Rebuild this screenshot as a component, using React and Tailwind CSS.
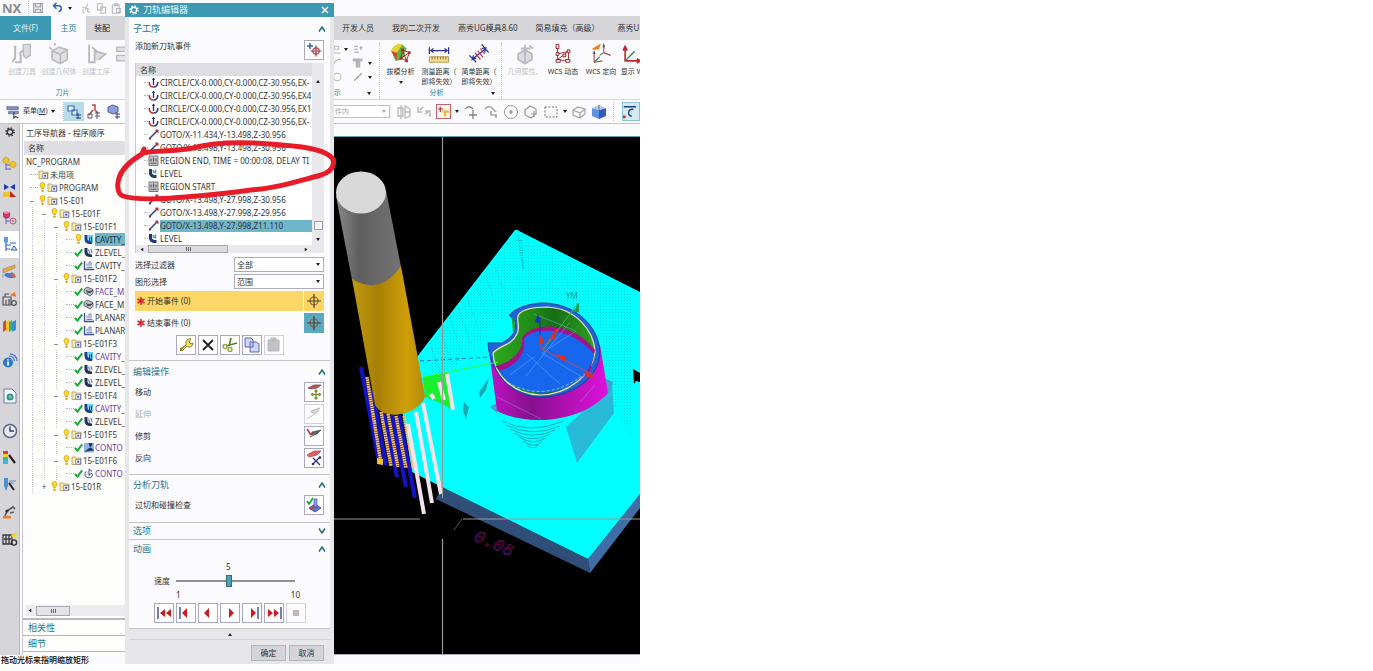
import React, { useState } from "react";

/* ---------- small shared drawings ---------- */

const Svg = ({ size = "size-4", box = "0 0 16 16", children }) => (
  <svg viewBox={box} className={`${size} shrink-0`} fill="none" aria-hidden="true">
    {children}
  </svg>
);

const Down = () => (
  <svg viewBox="0 0 4 3" className="h-[3px] w-1 shrink-0" aria-hidden="true">
    <path d="M0 0h4L2 3z" fill="#222" />
  </svg>
);

const Chevron = ({ up }) => (
  <Svg size="size-2" box="0 0 8 8">
    <path d={up ? "M1 6.500 4 2l3 4.500" : "M1 1.500 4 6l3-4.500"} stroke="#1d6a78" strokeWidth="1.500" />
  </Svg>
);

const Gear = ({ color, size = "size-[10px]" }) => (
  <Svg size={size} box="0 0 12 12">
    <circle cx="6" cy="6" r="3.300" stroke={color} strokeWidth="1.700" />
    <circle cx="6" cy="6" r="4.900" stroke={color} strokeWidth="1.500" strokeDasharray="1.900 1.950" />
  </Svg>
);

/* ---------- tree icons ---------- */

const Bulb = () => (
  <Svg size="h-[11px] w-[9px]" box="0 0 9 11">
    <path d="M4.500.5C2.800.5 2 1.700 2 3c0 1.200 1.200 2 1.400 3.500h2.200C5.800 5 7 4.200 7 3 7 1.700 6.200.5 4.500.5z" fill="#ffd91f" stroke="#c79a10" strokeWidth=".7" />
    <rect x="3.300" y="7.500" width="2.400" height="2.600" rx="1" fill="#d9a514" />
  </Svg>
);
const Check = () => (
  <Svg size="h-[11px] w-[9px]" box="0 0 9 11">
    <path d="M1 5.800 3.400 8.600 8.200 2.300" stroke="#12ae33" strokeWidth="2" />
  </Svg>
);
const Folder = () => (
  <Svg size="h-[11px] w-3" box="0 0 12 11">
    <path d="M1 2h3.500l1 1.200H10v6.300H1z" fill="#f8e9a8" stroke="#b8a468" strokeWidth=".9" />
    <rect x="4.800" y="4.300" width="4.800" height="4.800" fill="#fff" stroke="#6a72a8" strokeWidth=".8" />
    <path d="M6.200 5.700h2v2h-2z" fill="#46508c" />
  </Svg>
);
const OpIcon = ({ kind }) => (
  <Svg size="h-[11px] w-3" box="0 0 12 11">
    {kind === "cavity" && (
      <>
        <path d="M5 1h5v8H6z" fill="#5fd0ee" />
        <path d="M1.500 1h3v3.500c0 2 1.500 3 4.500 3v2.500C4 10.500 1.500 8.500 1.500 5z" fill="#1f3f86" />
        <path d="M6.500 3.500v4M8.500 3v4" stroke="#1c3a70" />
      </>
    )}
    {kind === "level" && (
      <>
        <path d="M1.500 1h3v3.500c0 2 1.500 3 4.500 3v2.500C4 10.500 1.500 8.500 1.500 5z" fill="#26335f" />
        <path d="M5.500 2.500 7 7M8 2l1 4" stroke="#6f86b8" strokeWidth="1.200" />
      </>
    )}
    {kind === "planar" && (
      <>
        <path d="M1.500 1v8.500H11" stroke="#3a4b8f" strokeWidth="1.300" />
        <path d="M3.500 7.500h6M4 6V3.500M6 6.500V2h2v4.500" stroke="#6b7fb8" />
      </>
    )}
    {kind === "face" && (
      <>
        <path d="M1 3.500 4 1l6 2.500v4L7 10 1 6.500z" fill="#b8bcc4" stroke="#4d525c" strokeWidth=".8" />
        <path d="M3 4.500 7 6.500 10 4M4 7l4-2" stroke="#33363d" />
      </>
    )}
    {kind === "contour" && (
      <>
        <rect x="1" y="1" width="10" height="9.500" fill="#8fb5e4" />
        <path d="M2 9.500c2 0 3-3 5-3.500s2 2 3.500 2.500M6 1.500h3L7.500 5z" fill="#1c2f66" stroke="#1c2f66" />
      </>
    )}
    {kind === "contour2" && (
      <path d="M3 3.500C1 6 2 9.500 5.500 9.800 9 10 10.500 7 8.800 5.200L6 7.200V1l3 2.500" fill="#dfe4ee" stroke="#44507c" />
    )}
  </Svg>
);

const tree = [
  { d: 0, t: "NC_PROGRAM", root: true },
  { d: 0, t: "未用项", folder: true },
  { d: 0, t: "PROGRAM", s: "bulb", folder: true },
  { d: 0, t: "15-E01", s: "bulb", folder: true, x: "−" },
  { d: 1, t: "15-E01F", s: "bulb", folder: true, x: "−" },
  { d: 2, t: "15-E01F1", s: "bulb", folder: true, x: "−" },
  { d: 3, t: "CAVITY_", s: "bulb", k: "cavity", sel: true },
  { d: 3, t: "ZLEVEL_", s: "ok", k: "level" },
  { d: 3, t: "CAVITY_", s: "ok", k: "planar" },
  { d: 2, t: "15-E01F2", s: "bulb", folder: true, x: "−" },
  { d: 3, t: "FACE_M", s: "ok", k: "face", v: true },
  { d: 3, t: "FACE_M", s: "ok", k: "face" },
  { d: 3, t: "PLANAR", s: "ok", k: "planar" },
  { d: 3, t: "PLANAR", s: "ok", k: "planar" },
  { d: 2, t: "15-E01F3", s: "bulb", folder: true, x: "−" },
  { d: 3, t: "CAVITY_", s: "ok", k: "cavity", v: true },
  { d: 3, t: "ZLEVEL_", s: "ok", k: "level" },
  { d: 3, t: "ZLEVEL_", s: "ok", k: "level" },
  { d: 2, t: "15-E01F4", s: "bulb", folder: true, x: "−" },
  { d: 3, t: "CAVITY_", s: "ok", k: "cavity", v: true },
  { d: 3, t: "ZLEVEL_", s: "ok", k: "level" },
  { d: 2, t: "15-E01F5", s: "bulb", folder: true, x: "−" },
  { d: 3, t: "CONTO", s: "ok", k: "contour", v: true },
  { d: 2, t: "15-E01F6", s: "bulb", folder: true, x: "−" },
  { d: 3, t: "CONTO", s: "ok", k: "contour2", v: true },
  { d: 1, t: "15-E01R", s: "bulb", folder: true, x: "+" },
];

function TreeRow({ n }) {
  return (
    <li className="flex h-[13px] items-center whitespace-nowrap" role="treeitem" aria-selected={!!n.sel}>
      {Array.from({ length: n.d }, (_, i) => (
        <span key={i} className="flex h-full w-3 shrink-0 justify-center">
          <span className="border-l border-dotted border-[#c9c9d4]" />
        </span>
      ))}
      {!n.root && (
        <span className="flex w-3 shrink-0 items-center justify-center text-[8px] leading-none text-[#444]">
          {n.x || <span className="ml-1 w-2 border-t border-dotted border-[#b9b9c6]" />}
        </span>
      )}
      {n.s === "bulb" && <Bulb />}
      {n.s === "ok" && <Check />}
      {n.folder && <Folder />}
      {n.k && <OpIcon kind={n.k} />}
      <span
        className={
          n.sel ? "grow bg-[#6fb6cb] text-[#17303a]" : n.v ? "text-[#6a3fa8]" : "text-[#3a3a3a]"
        }
      >
        {n.t}
      </span>
    </li>
  );
}

/* ---------- resource rail ---------- */

const railIcons = [
  {
    n: "装配导航器",
    d: (
      <>
        <path d="M4 5v9M4 9h8M4 13h5" stroke="#5a64c8" />
        <path d="M1 3l3-2 3 2v3L4 8 1 6zM8 7l3-2 3 2v3l-3 2-3-2z" fill="#f3c22c" stroke="#b98b14" strokeWidth=".6" />
      </>
    ),
  },
  {
    n: "约束导航器",
    d: (
      <>
        <path d="M2 1v6l5-3zM13 1v6L8 4z" fill="#2336b8" />
        <path d="M1 9h7v5H1z" fill="#f0c52a" />
        <path d="M8 14V8l6 6z" fill="#cf1f1f" />
      </>
    ),
  },
  {
    n: "部件导航器",
    d: (
      <>
        <path d="M4 6v8M4 11h4" stroke="#5a64c8" />
        <path d="M1.500 2.500v4c0 2 6 2 6 0v-4z" fill="#d83a66" stroke="#8c1c3d" strokeWidth=".7" />
        <ellipse cx="4.500" cy="2.500" rx="3" ry="1.300" fill="#f08aa6" />
        <circle cx="11" cy="11" r="3" stroke="#c05088" />
        <circle cx="11" cy="11" r="1" fill="#c05088" />
      </>
    ),
  },
  {
    n: "工序导航器",
    active: true,
    d: (
      <>
        <path d="M4 4v10M4 8h5M4 12h4" stroke="#3c62b8" strokeWidth="1.200" />
        <path d="M2 0h4v5L4 7 2 5z" fill="#5b9de0" />
        <path d="M8 6h6M9 13l3-4 3 4z" stroke="#2f5fc0" fill="#cfe2f8" />
      </>
    ),
  },
  {
    n: "机床导航器",
    d: (
      <>
        <path d="M1 5 13 1v3L1 9zM1 10v4" fill="#f2a732" stroke="#8e8e94" strokeWidth=".7" />
        <path d="M2 11c3-4 5 0 8-3l4 5c-4 2-8 2-12-2z" fill="#4f78c8" />
        <circle cx="11" cy="11" r="2" fill="#e8622c" />
      </>
    ),
  },
  {
    n: "机器库",
    d: (
      <>
        <path d="M1 6h8v8H1zM3 6V3h4M4 9v5M7 8v6" stroke="#505158" strokeWidth="1.200" />
        <path d="M8 4l5-3 1 5z" fill="#ef7330" />
        <circle cx="12" cy="12" r="2.300" stroke="#555" strokeWidth="1.200" />
      </>
    ),
  },
  {
    n: "重用库",
    d: (
      <>
        <path d="M1 4l3-2v10l-3 2z" fill="#d34b3e" />
        <path d="M4 4l3-2v10l-3 2z" fill="#f0c42c" />
        <path d="M7 4l3-2v10l-3 2z" fill="#48ae47" />
        <path d="M10 4l4-2v10l-4 2z" fill="#3b8fd6" />
      </>
    ),
  },
  {
    n: "HD3D 工具",
    gap: true,
    d: (
      <>
        <circle cx="6" cy="9.500" r="5" fill="#2f78cc" />
        <path d="M6 8.500v4M6 6.200v1.300" stroke="#fff" strokeWidth="1.700" />
        <path d="M7 3c3 0 5 2 5.500 5M8 .8C12 1 15 4 15 8" stroke="#3c76c0" strokeWidth="1.200" />
      </>
    ),
  },
  {
    n: "Web 浏览器",
    gap: true,
    d: (
      <>
        <path d="M2 1h8l4 4v10H2z" fill="#f6f9ff" stroke="#6f7ea0" />
        <circle cx="8" cy="9" r="3.500" fill="#2d8fa8" />
        <path d="M6 8l3-1 1 3-2 1z" fill="#7bd05c" />
      </>
    ),
  },
  {
    n: "历史记录",
    gap: true,
    d: (
      <>
        <circle cx="8" cy="8" r="6.500" fill="#e7ebf4" stroke="#5d6785" strokeWidth="1.500" />
        <path d="M8 3.500V8h4" stroke="#333b58" strokeWidth="1.400" />
      </>
    ),
  },
  {
    n: "系统材料",
    d: (
      <>
        <path d="M1 1h5v4H1z" fill="#e23a2e" />
        <path d="M1 4h5v3H1z" fill="#f5d32c" />
        <path d="M1 7h5v3H1z" fill="#3cc24a" />
        <path d="M1 10h5v4H1z" fill="#38b6e8" />
        <path d="M7 5l6 8" stroke="#222" strokeWidth="2.200" />
      </>
    ),
  },
  {
    n: "加工向导",
    d: (
      <>
        <path d="M2 1h4v8l-2 5-2-5z" fill="#4d8fd4" />
        <path d="M7 4h7M7 6h5" stroke="#6c8ac0" />
        <path d="M7 6l5 7" stroke="#222" strokeWidth="2" />
      </>
    ),
  },
  {
    n: "机器人",
    d: (
      <>
        <path d="M3 12l2-5 6-4 2 2M8 9l4-1" stroke="#5c5f68" strokeWidth="1.800" />
        <path d="M1 12h8v2.500H1z" fill="#e88032" />
        <circle cx="5" cy="7" r="1.600" fill="#333" />
      </>
    ),
  },
  {
    n: "机床库",
    d: (
      <>
        <path d="M1 4h9v9H1zM4 4v9M7 4v9M2 8h7" stroke="#3a3b40" strokeWidth="1.300" />
        <path d="M9 4l5-3 1 4-4 2z" fill="#f2d23a" />
        <circle cx="12" cy="11.500" r="2.600" stroke="#333" strokeWidth="1.400" />
      </>
    ),
  },
];

/* ---------- ribbon ---------- */

const G = "#b9b9bf";

const ribbonDisabled = {
  tool: (
    <>
      <path d="M9 1h5v8l-3 2-2-2z" fill="#dcdce0" stroke={G} />
      <path d="M3 2v9l-2 3M7 8v6H3M9 5l-3 3" stroke={G} strokeWidth="1.500" />
    </>
  ),
  geo: (
    <>
      <path d="M3 6l5-3 6 2v7l-5 3-6-3z" fill="#e2e2e6" />
      <path d="M3 6l5-3 6 2v7l-5 3-6-3zM3 6l6 2 5-3M9 8v7M1 3l2 2M5 0v2" stroke={G} strokeWidth="1.200" />
    </>
  ),
  op: (
    <>
      <path d="M7 6l8 2-6 5-2-1z" fill="#dcdce0" />
      <path d="M3 1v13h4V6l8 2-5 4M5 3l5 4" stroke={G} strokeWidth="1.300" />
    </>
  ),
  attr: (
    <>
      <path d="M3 8l5-3 5 3v4l-5 3-5-3z" fill="#dcdce0" />
      <path d="M8 1v9M5 4h7M3 8l5-3 5 3v4l-5 3-5-3zM8 10v5M11 2l3 2" stroke={G} strokeWidth="1.300" />
    </>
  ),
};

function RibbonItem({ icon, label, label2, muted, drop, width }) {
  return (
    <button
      type="button"
      disabled={muted}
      className={`flex shrink-0 flex-col items-center whitespace-nowrap text-[7px] leading-[10px] ${width} ${
        muted ? "text-[#c2c2c6]" : "text-[#333]"
      }`}
    >
      <Svg size="size-[22px]">{icon}</Svg>
      <span className="mt-[2px]">{label}</span>
      {label2 && <span>{label2}</span>}
      {drop && <span className="mt-1"><Down /></span>}
    </button>
  );
}

const draft = (
  <>
    <path d="M1 6c1-4 5-6 8-5l3 3-3 8-5 1z" fill="#58b947" />
    <path d="M1 6c1-4 5-6 8-5l-4 6z" fill="#f0d02c" />
    <path d="M1 6l4 1 0 6z" fill="#e0452c" />
    <path d="M9 5l5 2-2 6-4-2zM14 7l-6 4M9 5l3 8" stroke="#a02424" strokeWidth=".7" />
    <path d="M8 4h2v2H8zM13 6h2v2h-2zM11 12h2v2h-2zM7 10h2v2H7z" fill="#b02a2a" />
  </>
);
const ruler = (
  <>
    <path d="M1 3v5M15 3v5M2 5.500h12M4 4 2 5.500 4 7M12 4l2 1.500L12 7" stroke="#27339e" strokeWidth=".9" />
    <path d="M1 10h14v4H1z" fill="#f5dc93" stroke="#a88b3c" strokeWidth=".6" />
    <path d="M3 10v2M5 10v2M7 10v2M9 10v2M11 10v2M13 10v2" stroke="#7a6428" strokeWidth=".6" />
  </>
);
const simple = (
  <>
    <path d="M1 9l5 5M10 1l5 6M3.500 11.500 13 4M6 11l-3 1 1-3M10 4l3-.5L12 7" stroke="#27339e" strokeWidth=".9" />
    <path d="M5 7l4 5M7 5.500l4 5M9 4l3 4" stroke="#c8383c" strokeWidth=".9" />
  </>
);
const wcsDyn = (
  <>
    <path d="M4 3v9l6 1M4 8l8-2M4 12l8-6M12 6v7" stroke="#a33" strokeWidth=".7" />
    <path d="M3 1h2v3H3zM3 7h2v2H3zM3 12h3v2H3zM11 5h2v2h-2zM10 12h3v2h-3zM8 8h2v2H8z" fill="#fff" stroke="#8e1e24" strokeWidth=".7" />
  </>
);
const wcsDir = (
  <>
    <path d="M3 14V7M3 14l6-1M10 7V1M10 7l5 2" stroke="#b04848" strokeWidth=".8" />
    <path d="M3 14l4-4M10 7 7 9" stroke="#3f7a4c" strokeWidth=".8" />
    <path d="M2 8l1-3 1 3zM9 3l1-3 1 3z" fill="#555" />
    <path d="M2 4.500 7 1.500 6 4z" fill="#f07b20" stroke="#f07b20" />
  </>
);
const showW = (
  <>
    <path d="M3 4v9h10M1.500 5.500 3 2.500l1.500 3M11.500 11.500l2.500 1.500-2.500 1.500" stroke="#c22a30" strokeWidth="1.200" />
    <path d="M3 13l7-7" stroke="#3f7a4c" />
  </>
);

const Sep = () => <span className="w-px shrink-0 self-stretch border-l border-dotted border-[#c4c4ca]" />;

function Ribbon() {
  return (
    <header className="text-[8px] text-[#333]">
      <div className="flex h-4 items-center bg-[#fbfbfd] pl-[2px]">
        <span className="w-[26px] text-[13px] leading-none font-bold text-[#8b8b90]">NX</span>
        <Sep />
        <div className="flex items-center gap-1 pl-1">
          <button type="button" aria-label="保存"><Svg size="size-[10px]"><path d="M1 1h14v14H1zM4 1v5h8V1M4 15v-5h8v5" stroke="#a4a4aa" strokeWidth="2" /></Svg></button>
          <span className="w-px" />
          <button type="button" aria-label="撤消"><Svg size="size-3"><path d="M3 5h6c4 0 5 6 0 8M6 1 2 5l4 4" stroke="#2b64b4" strokeWidth="2" /></Svg></button>
          <Down />
          <span className="w-px" />
          <button type="button" aria-label="剪切" disabled><Svg size="size-[11px]"><path d="M10 1 6 10M2 6l10 3M4 10a2 2 0 1 0 1 4M11 9a2 2 0 1 0 2 3" stroke={G} strokeWidth="1.500" /></Svg></button>
          <button type="button" aria-label="复制" disabled><Svg size="size-[11px]"><path d="M2 1h7v9H2zM7 6h7v9H7z" stroke={G} strokeWidth="1.500" /></Svg></button>
          <button type="button" aria-label="粘贴" disabled><Svg size="size-[11px]"><path d="M2 3h10v12H2zM5 1h5v3H5zM8 8h6v6H8z" stroke={G} strokeWidth="1.500" /></Svg></button>
        </div>
      </div>

      <nav className="flex h-6 items-stretch bg-[#d6d6da]">
        <button type="button" className="w-[51px] shrink-0 bg-[#3c98b3] text-[#e3f4f8]">文件(F)</button>
        <button type="button" className="w-[35px] shrink-0 bg-[#fbfbfd] text-[#237f98]">主页</button>
        <button type="button" className="w-8 shrink-0 text-[#222]">装配</button>
        <span className="w-[224px] shrink-0" />
        <div className="flex min-w-0 grow items-center gap-[18px] overflow-hidden whitespace-nowrap">
          <button type="button">开发人员</button>
          <button type="button">我的二次开发</button>
          <button type="button">燕秀UG模具8.60</button>
          <button type="button">简易填充（高级）</button>
          <button type="button">燕秀U</button>
        </div>
      </nav>

      <div className="flex h-[60px] overflow-hidden border-b border-[#d5d5da] bg-[#fbfbfd] pt-[3px]">
        <section className="flex w-[125px] shrink-0 flex-col overflow-hidden">
          <div className="flex grow pl-1">
            <RibbonItem muted icon={ribbonDisabled.tool} label="创建刀具" width="w-9" />
            <RibbonItem muted icon={ribbonDisabled.geo} label="创建几何体" width="w-[38px]" />
            <RibbonItem muted icon={ribbonDisabled.op} label="创建工序" width="w-9" />
            <Svg size="size-[22px]"><path d="M2 3h9v3H2zM2 9h9v4H2z" fill="#e4e4e8" stroke={G} /></Svg>
          </div>
          <span className="pb-[1px] text-center text-[7px] leading-[10px] text-[#237f98]">刀片</span>
        </section>
        <span className="w-[207px] shrink-0" />
        <section className="flex w-[47px] shrink-0 flex-col">
          <div className="grid grow grid-cols-[12px_8px_16px_8px] items-center pb-1">
            <Svg size="size-3"><path d="M3 3h6v4H3zM2 12h9" stroke={G} strokeWidth="1.400" /></Svg>
            <Down />
            <Svg size="size-3"><path d="M3 3h5M3 7h5M3 11h6M10 5h4M12 3v5" stroke="#9a9ab0" strokeWidth="1.400" /></Svg>
            <span />
            <Svg size="size-3"><path d="M2 13C2 6 6 3 12 3" stroke={G} strokeWidth="1.500" /></Svg>
            <span />
            <Svg size="size-3"><path d="M1 2h13v4H1zM5 6h6v8H5z" fill="#b4b4ba" /></Svg>
            <Down />
            <Svg size="size-3"><circle cx="7" cy="8" r="5" stroke={G} strokeWidth="1.500" /></Svg>
            <span />
            <Svg size="size-3"><path d="M3 13 13 3" stroke="#9a9aa0" strokeWidth="1.500" /></Svg>
            <Down />
          </div>
          <div className="flex items-center justify-between pr-2 pb-[1px] pl-[2px] text-[7px] leading-[10px] text-[#237f98]">
            示 <Down />
          </div>
        </section>
        <Sep />
        <section className="flex shrink-0 flex-col px-[2px]">
          <div className="flex grow">
            <RibbonItem icon={draft} label="拔模分析" width="w-[37px]" drop />
            <RibbonItem icon={ruler} label="测量距离（" label2="即将失效）" width="w-10" />
            <RibbonItem icon={simple} label="简单距离（" label2="即将失效）" width="w-10" />
          </div>
          <div className="flex items-center pr-1 pb-[1px] text-[7px] leading-[10px] text-[#237f98]">
            <span className="grow text-center">分析</span> <Down />
          </div>
        </section>
        <Sep />
        <section className="flex min-w-0 grow overflow-hidden pl-1">
          <RibbonItem muted icon={ribbonDisabled.attr} label="几何属性、" width="w-[38px]" />
          <RibbonItem icon={wcsDyn} label="WCS 动态" width="w-[38px]" />
          <RibbonItem icon={wcsDir} label="WCS 定向" width="w-[38px]" />
          <RibbonItem icon={showW} label="显示 W" width="w-6" />
        </section>
      </div>

      <div className="flex h-6 items-center overflow-hidden border-b border-[#c3c3dc] bg-[#fbfbfd]">
        <div className="flex w-[125px] shrink-0 items-center overflow-hidden pl-[6px] text-[7px]">
          <button type="button" className="flex shrink-0 items-center gap-[3px] whitespace-nowrap">
            <Svg size="size-[14px]"><path d="M1 2h13v3H1zM3 7h11v3H3z" fill="#8b96c6" stroke="#4c568c" strokeWidth=".8" /><path d="M9 8v7l2-2 3 2" stroke="#333" strokeWidth="1.200" /></Svg>
            <span>菜单(<u>M</u>)</span>
            <Down />
          </button>
          <span className="w-2 shrink-0" />
          <Sep />
          <button type="button" aria-label="程序顺序视图" className="flex h-[19px] w-5 shrink-0 items-center justify-center bg-[#b8dbe8]">
            <Svg><path d="M2 2h6v5H2zM6 6h5v5H6z" fill="#e5f1fb" stroke="#3d6db5" strokeWidth="1.200" /><path d="M10 11h5M10 14h5M12 9v6" stroke="#2e3c8e" /></Svg>
          </button>
          <button type="button" aria-label="机床视图" className="flex w-5 shrink-0 justify-center">
            <Svg><path d="M6 1h3v5l3 3M7 6l-4 5" stroke="#c04444" strokeWidth="1.500" /><path d="M2 10h4v4H2zM9 9h5M9 12h5M11 8v7" stroke="#5a5a72" /></Svg>
          </button>
          <button type="button" aria-label="几何视图" className="flex w-5 shrink-0 justify-center">
            <Svg><path d="M2 3l5-2 5 2v5l-5 2-5-2z" fill="#8e9ddc" stroke="#39468e" strokeWidth=".8" /><path d="M9 10h5M9 13h5M11 9v6" stroke="#34407e" /></Svg>
          </button>
        </div>
        <span className="w-[203px] shrink-0" />
        <div className="flex grow items-center">
          <label className="grid w-[62px] shrink-0 items-center">
            <select disabled aria-label="选择范围" className="col-start-1 row-start-1 h-[13px] w-full appearance-none border border-[#c0c0c6] bg-white pl-[6px] text-[7px] leading-none text-[#a8a8ac]">
              <option>件内</option>
            </select>
            <span className="col-start-1 row-start-1 mr-1 justify-self-end opacity-40"><Down /></span>
          </label>
          <div className="ml-[6px] flex shrink-0 items-center gap-1">
            <Svg><path d="M2 4h5v8H2zM9 2l5 3v7l-5 2zM5 1v14M9 8h5" stroke={G} strokeWidth="1.300" /></Svg>
            <Svg><path d="M2 3v5h4M4 6l3-3M9 7h5v6M9 10l4-3" stroke={G} strokeWidth="1.600" /></Svg>
            <button type="button" aria-label="捕捉点" className="flex size-[15px] items-center justify-center border border-[#c66070] bg-[#fff6ee]">
              <Svg size="size-3"><path d="M3 1v7M0 4h7" stroke="#a4262e" strokeWidth="1.500" /><path d="M6 6h9v3H11v5H8V9H6z" fill="#eeb63c" /></Svg>
            </button>
            <Down />
            <Svg><path d="M2 5c2-3 6-3 8 0M10 6v9M6 11h8" stroke="#85858c" strokeWidth="1.300" /></Svg>
            <Svg><path d="M2 5c2-3 6-3 8 0l3 3M8 7v4h5v3" stroke="#a5a5ac" strokeWidth="1.600" /></Svg>
            <Svg><circle cx="8" cy="8" r="6.500" stroke="#96969e" /><path d="M8 6v4M6 8h4" stroke="#77777e" /></Svg>
            <Svg><path d="M2 6l5-4 6 3v5l-5 4-6-3zM8 10h6M11 7v6" stroke="#9a9aa2" strokeWidth="1.200" /></Svg>
            <Svg><path d="M2 3h12v10H2z" stroke="#73737c" strokeDasharray="2 1.500" /></Svg>
            <Down />
            <Svg><path d="M2 6l5-3 7 2v5l-5 4-7-3zM2 6l7 3 5-4M9 9v5" stroke="#a4a4ab" strokeWidth="1.200" /></Svg>
            <Svg><path d="M1 4l7 2v9l-7-3z" fill="#5b93e2" /><path d="M8 6l7-2v8l-7 3z" fill="#3458bd" /><path d="M1 4l7-3 7 3-7 2z" fill="#a9ccf6" /><path d="M8 1v5" stroke="#d34b4b" /></Svg>
          </div>
          <span className="w-[6px]" />
          <Sep />
          <span className="ml-2 flex h-[19px] grow items-center border border-[#8cc0d6] bg-[#d4eaf3]">
            <Svg size="size-[14px]"><path d="M1 2h14M12 5c-6-1-8 6-2 8" stroke="#23407c" strokeWidth="1.500" /><path d="M0 12h3v3H0z" fill="#d22" /></Svg>
          </span>
        </div>
      </div>
    </header>
  );
}

/* ---------- 3D viewport ---------- */

function Viewport() {
  return (
    <svg
      viewBox="334 137 306 517"
      preserveAspectRatio="xMinYMin slice"
      className="h-full min-h-0 w-full"
      fill="none"
      role="img"
      aria-label="刀轨视图"
    >
      <defs>
        <linearGradient id="gray" x1="0" x2="1">
          <stop offset="0" stopColor="#8b8b8b" /><stop offset=".35" stopColor="#5e5e5e" /><stop offset="1" stopColor="#747474" />
        </linearGradient>
        <linearGradient id="gold" x1="0" x2="1">
          <stop offset="0" stopColor="#c39a10" /><stop offset=".35" stopColor="#a67f06" /><stop offset=".75" stopColor="#cf9f08" /><stop offset="1" stopColor="#b48a08" />
        </linearGradient>
        <linearGradient id="mag" x1="0" x2="1">
          <stop offset="0" stopColor="#c012c4" /><stop offset=".35" stopColor="#86108e" /><stop offset="1" stopColor="#e010dc" />
        </linearGradient>
        <linearGradient id="green" x1="0" x2="1">
          <stop offset="0" stopColor="#2fa81c" /><stop offset=".4" stopColor="#1f8a18" /><stop offset=".6" stopColor="#166f16" /><stop offset="1" stopColor="#2fa022" />
        </linearGradient>
        <pattern id="dots" width="3" height="3" patternUnits="userSpaceOnUse">
          <rect width="1" height="1" fill="#22b4c4" />
        </pattern>
      </defs>
      <rect x="334" y="137" width="306" height="517" fill="#000" />

      {/* plate */}
      <path d="M442 487 588 559 590 573 436 499z" fill="#2f4f78" />
      <path d="M588 559 640 494v14L590 573z" fill="#3f6da6" />
      <path d="M515 230q2-1 4 1L640 292V494L588 559 442 487 412 472 404 420 396 386 420 353z" fill="#00ffff" />
      <path d="M515 236 632 295V440L612 400 600 330 560 300 515 305 480 345 430 385V346z" fill="url(#dots)" opacity=".6" />
      <g stroke="#2bb6c0" strokeWidth=".8" strokeDasharray="1 1.500">
        <path d="M450 318l12 36M458 308l13 36M467 297l12 34M476 285l12 34M485 274l10 30M494 263l9 26M440 331l14 36M430 343l10 30" />
        <path d="M518 235l5 34M521 240l3 30" stroke="#167a86" />
      </g>
      <path d="M490 407l7-4v10zM600 376l13 6-4 12z" fill="#3fa3cc" />
      <path d="M566 427 612 384 614 413 577 463z" fill="#35a9cf" opacity=".8" />
      <g stroke="#168c9c" strokeWidth=".7">
        <path d="M502 421q28 14 62 0M506 425q26 13 54 1M510 429q22 12 45 1M514 433q18 11 36 1M519 437q14 9 27 1M523 441q10 8 19 1M527 445q6 6 11 0" />
      </g>
      <path d="M479 392l10-14-3 12-6 8zM464 402l5 5-3 12-3-8z" fill="#18a8b2" />

      {/* cup */}
      <path d="M489 350 497 411C525 426 580 424 608 393L600 345z" fill="url(#mag)" />
      <path d="M488 343 502 343Q519 334 515 321L509 315Q518 305 540 303C577 302 599 328 600 352 599 380 570 397 540 397 513 397 490 374 488 343z" fill="#1f63d6" stroke="#15429c" />
      <path d="M511 316q7 6 2 18l-1-14z" fill="#2f9e1c" />
      <path d="M493 353C500 345 511 346 517 334 521 326 515 319 519 314 525 308 536 307 547 307 575 308 594 330 595 352 592 376 566 395 540 395 514 394 494 376 493 353z" fill="url(#green)" stroke="#f6e6bf" strokeWidth="1.200" />
      <path d="M495 366C512 362 523 352 522 338 530 322 572 320 595 350L590 372 560 390 512 384z" fill="#a3128c" />
      <path d="M499 371C514 367 527 355 524 339 532 327 570 325 594 354 591 376 566 393 541 393 523 392 508 385 499 371z" fill="#1767ee" />
      <path d="M504 380q40 26 82-7" stroke="#9fd0ff" strokeWidth=".8" strokeDasharray="3 2" />
      <path d="M527 354 560 384M534 314l42 17-34 22 40 24M510 375l24-18M570 322l-44 54M497 397l44 22M580 402l15-17" stroke="#9ec1ff" strokeWidth=".5" opacity=".7" />
      <path d="M540 335v-18" stroke="#182fae" />
      <path d="M535 322l3-8 2 9z" fill="#1730c8" />
      <path d="M543 350 578 303" stroke="#3fb061" />
      <path d="M573 312l6-10v10z" fill="#1f9d4c" />
      <path d="M542 349l52 26M541 349v-12M542 349l15-20" stroke="#e0442c" strokeWidth=".8" />
      <path d="M556 355l9 1-1 5zM585 371l10 7-9-2zM550 338l7-8-3 9zM539 343l2-8 2 8z" fill="#e02d24" stroke="#e02d24" />
      <text x="566" y="299" fontSize="8" fill="#1a9a8a">YM</text>

      {/* toolpath passes */}
      <path d="M420 361 490 357" stroke="#1a6fd0" strokeDasharray="4 3" />
      <path d="M424 377 498 362" stroke="#30ff30" />
      <path d="M423 377 447 373 453 410 438 402 425 397z" fill="#18f030" />
      <path d="M361 368 371 374 386 412 386 466 380 463 376 456z" fill="#000" />
      <g stroke="#1512c8" strokeWidth="4">
        <path d="M361 367 378 457M372 390 386 465M383 412 397 477M392 415 406 487M399 415 415 498" />
      </g>
      <g stroke="#f2be70" strokeWidth="3.500" strokeDasharray="1.800 .5">
        <path d="M367 377 381 463M381 412 391 466M388 414 398 467M396 416 406 468M404 416 414 470" />
      </g>
      <path d="M377 458l6 1v6l-6-1z" fill="#f0c030" />
      <g stroke="#f4e2ea" strokeWidth="4">
        <path d="M408 424 424 514M416 412 432 503M423 403 441 494M447 374 453 410M439 382 444 400M431 394 434 399" />
      </g>

      {/* tool */}
      <path d="M336 196 352 280Q380 296 401 267L386 190z" fill="url(#gray)" />
      <path d="M352 279Q380 296 401 266L425 396C422 412 386 424 375 405z" fill="url(#gold)" />
      <ellipse cx="361" cy="192.500" rx="25" ry="21" fill="#d9d9d9" />

      {/* crosshair */}
      <path d="M442.500 137V498M442.500 539V654M334 519H420M463 519H640" stroke="#9a9a9a" strokeWidth="1.200" />
      <path d="M454 530 462 519" stroke="#555" />
      <text transform="translate(473 540) rotate(24)" fontSize="17" fontStyle="italic" stroke="#8b1580" strokeWidth=".5" className="font-['Liberation_Mono',monospace]">0.06</text>
      <path d="M500 522l6-2M512 526l5-2" stroke="#8b1580" />
      <path d="M633 369 640 373v9l-4-1-2 3z" fill="#000" />
    </svg>
  );
}

/* ---------- dialog ---------- */

const EventIcon = ({ k }) => (
  <Svg size="size-[11px]" box="0 0 11 11">
    {k === "circle" && (
      <>
        <path d="M5.500 1v7" stroke="#25306e" strokeWidth="1.300" />
        <path d="M1.200 5c0 3 1.500 5 4.300 5" stroke="#c22e35" strokeWidth="1.500" />
        <path d="M5.500 10c2.800 0 4.300-2 4.300-5" stroke="#2a368c" strokeWidth="1.500" />
        <path d="M3.800 3 5.500.8 7.200 3z" fill="#25306e" />
      </>
    )}
    {k === "goto" && (
      <>
        <path d="M1.500 9.500 9 2" stroke="#2b3796" strokeWidth="1.400" />
        <path d="M7.500 1h2.500v2.500z" fill="#c22e35" stroke="#c22e35" />
        <path d="M1 8.500h2v2H1z" fill="#7b3040" />
      </>
    )}
    {k === "region" && (
      <>
        <path d="M1 1h9v9.500H1z" fill="#c9c9cd" stroke="#77777c" />
        <path d="M3 3.500v3M5.500 2.500v4M8 3.500v3M2.500 8.200h6" stroke="#48484e" strokeWidth="1.100" />
      </>
    )}
    {k === "level" && (
      <>
        <path d="M1 1h3v3.500c0 2 1.500 2.500 4.500 2.500v3C4 10.500 1 8.500 1 5z" fill="#243a70" />
        <path d="M5 2l1 3M7.500 1.500v4" stroke="#3c9aa6" strokeWidth="1.500" />
      </>
    )}
  </Svg>
);

const events = [
  ["circle", "CIRCLE/CX-0.000,CY-0.000,CZ-30.956,EX-"],
  ["circle", "CIRCLE/CX-0.000,CY-0.000,CZ-30.956,EX4"],
  ["circle", "CIRCLE/CX-0.000,CY-0.000,CZ-30.956,EX1"],
  ["circle", "CIRCLE/CX-0.000,CY-0.000,CZ-30.956,EX-"],
  ["goto", "GOTO/X-11.434,Y-13.498,Z-30.956"],
  ["goto", "GOTO/X-13.498,Y-13.498,Z-30.956"],
  ["region", "REGION END, TIME = 00:00:08, DELAY TI"],
  ["level", "LEVEL"],
  ["region", "REGION START"],
  ["goto", "GOTO/X-13.498,Y-27.998,Z-30.956"],
  ["goto", "GOTO/X-13.498,Y-27.998,Z-29.956"],
  ["goto", "GOTO/X-13.498,Y-27.998,Z11.110"],
  ["level", "LEVEL"],
];

const IconButton = ({ label, disabled, tone = "border border-[#a9a9c4] bg-white", children }) => (
  <button type="button" aria-label={label} disabled={disabled} className={`flex size-5 shrink-0 items-center justify-center ${tone} ${disabled ? "opacity-50" : ""}`}>
    {children}
  </button>
);

const Target = () => (
  <Svg>
    <circle cx="8" cy="8" r="4" stroke="#9a5a38" strokeWidth="1.200" />
    <path d="M8 1v14M1 8h14" stroke="#4a4032" strokeWidth="1.200" />
  </Svg>
);

const Star = () => (
  <svg viewBox="0 0 8 8" className="mx-[2px] size-2 shrink-0" aria-hidden="true">
    <path d="M4 0v8M.5 2l7 4M7.500 2l-7 4" stroke="#d3222a" strokeWidth="1.500" />
  </svg>
);

const SectionHead = ({ title, open = true, h }) => (
  <button type="button" className={`flex w-full items-center justify-between px-1 text-[9px] text-[#1f7890] ${h}`}>
    {title}
    <Chevron up={open} />
  </button>
);

const Pick = ({ id, label, value }) => (
  <div className="flex h-[15px] items-center justify-between">
    <label htmlFor={id}>{label}</label>
    <span className="grid w-[90px] items-center">
      <select id={id} className="col-start-1 row-start-1 h-[15px] w-full appearance-none border border-[#adadbd] bg-white pl-[2px] text-[8px] leading-none">
        <option>{value}</option>
      </select>
      <span className="pointer-events-none col-start-1 row-start-1 mr-1 justify-self-end"><Down /></span>
    </span>
  </div>
);

const EditRow = ({ label, disabled, children }) => (
  <div className={`flex h-5 items-center justify-between ${disabled ? "text-[#b0b0b4]" : ""}`}>
    {label}
    <IconButton label={label} disabled={disabled}>{children}</IconButton>
  </div>
);

const play = [
  ["到起点", "M2 2v12", "M9 4v8L4 8zM15 4v8l-5-4z"],
  ["上一步", "M2 2v12", "M9 3v10L4 8z"],
  ["后退", "", "M9 3v10L4 8z"],
  ["播放", "", "M7 3v10l5-5z"],
  ["下一步", "M14 2v12", "M7 3v10l5-5z"],
  ["到终点", "M15 2v12", "M2 4v8l5-4zM8 4v8l5-4z"],
];

function Dialog() {
  const [speed, setSpeed] = useState(5);
  return (
    <div role="dialog" aria-label="刀轨编辑器" className="z-10 col-start-1 row-start-1 mt-[3px] ml-[125px] w-[209px] bg-[#e7e7ea] text-[8px] leading-[12px] text-[#333]">
      <div className="flex h-[14px] items-center bg-[#3c98b3] pr-[5px] pl-1 text-[9px] text-[#f2fafc]">
        <Gear color="#fff" />
        <span className="ml-1 grow">刀轨编辑器</span>
        <button type="button" aria-label="关闭"><Svg size="size-2" box="0 0 8 8"><path d="M1 1l6 6M7 1 1 7" stroke="#fff" strokeWidth="1.500" /></Svg></button>
      </div>

      <section className="mx-1 border-b border-[#c4c4ca] bg-[#fbfbfd] pb-[5px]">
        <SectionHead title="子工序" h="h-[23px]" />
        <div className="px-[6px]">
          <div className="flex h-5 justify-between">
            添加新刀轨事件
            <IconButton label="添加新刀轨事件">
              <Svg><path d="M4 1v6M1 4h6" stroke="#2e62b6" strokeWidth="1.500" /><circle cx="10" cy="9" r="3.200" stroke="#b54650" strokeWidth="1.200" /><path d="M10 3.500v11M4.500 9h11" stroke="#9c3640" strokeWidth="1.200" /></Svg>
            </IconButton>
          </div>

          <div className="mt-[3px] border-l border-[#c8c8ce]">
            <div className="flex">
              <div className="w-0 min-w-0 grow overflow-hidden">
                <table className="w-full table-fixed border-collapse">
                  <thead>
                    <tr className="h-[13px] bg-[#dedee2]">
                      <th className="py-0 pl-1 text-left font-normal">名称</th>
                    </tr>
                  </thead>
                  <tbody className="bg-white">
                    {events.map(([k, t], i) => (
                      <tr key={i} className="h-[13px]">
                        <td className="p-0">
                          <div className="flex h-[13px] items-center whitespace-nowrap">
                            <span className="ml-2 w-1 shrink-0 border-t border-dotted border-[#b9b9c6]" />
                            <EventIcon k={k} />
                            <span className={i === 11 ? "ml-px grow bg-[#6fb6cb]" : "ml-px"}>{t}</span>
                          </div>
                        </td>
                      </tr>
                    ))}
                  </tbody>
                </table>
              </div>
              <div className="flex w-3 shrink-0 flex-col items-center bg-[#e9e9ed] pt-[17px] pb-1">
                <span className="rotate-180"><Down /></span>
                <span className="grow" />
                <span className="mb-2 h-[9px] w-[9px] border border-[#a0a0aa] bg-[#f5f5f8]" />
                <Down />
              </div>
            </div>
            <div className="flex h-2 items-center bg-[#e9e9ed] pr-4 pl-1">
              <span className="rotate-90"><Down /></span>
              <span className="ml-1 flex h-2 w-[80px] items-center justify-center gap-px border border-[#a8a8b0] bg-[#dcdce0]">
                <span className="h-1 w-px bg-[#666]" /><span className="h-1 w-px bg-[#666]" /><span className="h-1 w-px bg-[#666]" />
              </span>
              <span className="grow" />
              <span className="-rotate-90"><Down /></span>
            </div>
          </div>

          <div className="mt-1 flex flex-col gap-[2px]">
            <Pick id="filter" label="选择过滤器" value="全部" />
            <Pick id="graphic" label="图形选择" value="范围" />
            <div className="flex h-5 items-center gap-px">
              <span className="flex h-full grow items-center bg-[#fcd667]">
                <Star />开始事件 (0)
              </span>
              <IconButton label="开始事件" tone="bg-[#fcd667]"><Target /></IconButton>
            </div>
            <div className="flex h-5 items-center">
              <span className="flex h-full grow items-center">
                <Star />结束事件 (0)
              </span>
              <IconButton label="结束事件" tone="bg-[#5ba9c0]"><Target /></IconButton>
            </div>
            <div className="flex justify-center gap-[2px]">
              <IconButton label="编辑"><Svg><path d="M2 14l6-6M8 8c-1-4 2-7 5-6l-2 3 2 2 2-1c0 4-4 5-6 3l-5 5-2-2z" fill="#f6e168" stroke="#8f7c22" /></Svg></IconButton>
              <IconButton label="删除"><Svg><path d="M3 3l10 10M13 3 3 13" stroke="#222" strokeWidth="1.800" /></Svg></IconButton>
              <IconButton label="剪切"><Svg><path d="M9 1 7 9M15 6 4 9" stroke="#5c7a34" strokeWidth="1.700" /><circle cx="3" cy="9.500" r="2" stroke="#93a63c" strokeWidth="1.400" /><circle cx="8" cy="12.500" r="2" stroke="#93a63c" strokeWidth="1.400" /></Svg></IconButton>
              <IconButton label="复制"><Svg><path d="M1 1h6l2 2v7H1zM6 5h6l3 2v8H6z" fill="#cfd6f7" stroke="#5967b8" /></Svg></IconButton>
              <IconButton label="粘贴" disabled><Svg><path d="M2 3h11v11H2zM5 1h5v3H5z" fill="#8a8a90" stroke="#77777c" /></Svg></IconButton>
            </div>
          </div>
        </div>
      </section>

      <section className="mx-1 border-b border-[#c4c4ca] bg-[#fbfbfd] pb-[6px]">
        <SectionHead title="编辑操作" h="h-[21px]" />
        <div className="flex flex-col gap-[2px] px-[6px]">
          <EditRow label="移动"><Svg><path d="M2 4 8 1h7l-4 3-6 1z" fill="#c65468" stroke="#6d3440" strokeWidth=".7" /><path d="M10 6v9M5.500 10.500h9M8.500 7.500 10 6l1.500 1.500M8.500 13.500 10 15l1.500-1.500M7 9l-1.500 1.500L7 12M13 9l1.500 1.500L13 12" stroke="#7d9636" strokeWidth="1.400" /></Svg></EditRow>
          <EditRow label="延伸" disabled><Svg><path d="M5 5 14 2l-3 4-5 1zM1 13l9-6" fill="#b9b9be" stroke="#88888e" /></Svg></EditRow>
          <EditRow label="修剪"><Svg><path d="M6 4 15 2l-4 4-6 1z" fill="#566" stroke="#444" strokeWidth=".7" /><path d="M1 1l4 6" stroke="#c42a30" strokeWidth="1.500" /><path d="M4 9l6-3" stroke="#666" /></Svg></EditRow>
          <EditRow label="反向"><Svg><path d="M1 5 8 1h7l-4 4-8 2z" fill="#e0606c" stroke="#b13a46" strokeWidth=".7" /><path d="M7 8l7 7M14 7l-7 7" stroke="#26307c" strokeWidth="1.300" /><circle cx="14" cy="7.500" r="1.300" fill="#26307c" /><circle cx="7" cy="14" r="1.300" fill="#26307c" /></Svg></EditRow>
        </div>
      </section>

      <section className="mx-1 border-b border-[#c4c4ca] bg-[#fbfbfd] pb-[7px]">
        <SectionHead title="分析刀轨" h="h-5" />
        <div className="px-[6px]">
          <EditRow label="过切和碰撞检查"><Svg><path d="M3 11l6-4 6 4-6 4z" fill="#5b78d8" stroke="#2d3f94" strokeWidth=".8" /><path d="M8 2h3v8H8z" fill="#88a4ec" stroke="#2d3f94" strokeWidth=".6" /><path d="M4 12l5-2" stroke="#c83038" strokeWidth="1.600" /><path d="M1 4l2 3 4-6" stroke="#18a838" strokeWidth="1.800" /></Svg></EditRow>
        </div>
      </section>

      <section className="mx-1 border-b border-[#c4c4ca] bg-[#fbfbfd]">
        <SectionHead title="选项" open={false} h="h-4" />
      </section>

      <section className="mx-1 border-b border-[#c4c4ca] bg-[#fbfbfd] pb-[5px]">
        <SectionHead title="动画" h="h-[18px]" />
        <div className="grid grid-cols-[22px_119px] items-center pt-1 pl-[25px]">
          <span />
          <output className="ml-[50px] h-[10px] leading-[10px]">{speed}</output>
          <label htmlFor="speed">速度</label>
          <input
            id="speed"
            type="range"
            min="1"
            max="10"
            value={speed}
            onChange={(e) => setSpeed(Number(e.target.value))}
            className="h-[18px] w-full appearance-none bg-transparent [&::-webkit-slider-runnable-track]:h-[2px] [&::-webkit-slider-runnable-track]:bg-[#8d9192] [&::-webkit-slider-thumb]:-mt-[5px] [&::-webkit-slider-thumb]:h-3 [&::-webkit-slider-thumb]:w-[6px] [&::-webkit-slider-thumb]:appearance-none [&::-webkit-slider-thumb]:border [&::-webkit-slider-thumb]:border-[#3b6772] [&::-webkit-slider-thumb]:bg-[#4ba3ba]"
          />
          <span />
          <span className="-mr-[5px] flex h-[10px] justify-between leading-[10px]"><span>1</span><span>10</span></span>
        </div>
        <div className="mt-[3px] flex gap-[2px] pl-[25px]">
          {play.map(([n, bar, tri]) => (
            <IconButton key={n} label={n}>
              <Svg><path d={bar} stroke="#4a4f9e" strokeWidth="1.500" /><path d={tri} fill="#cc1a1e" /></Svg>
            </IconButton>
          ))}
          <IconButton label="停止" disabled><Svg><path d="M5 5h6v6H5z" fill="#86777c" /></Svg></IconButton>
        </div>
      </section>

      <div className="mx-1 flex h-[11px] items-center justify-center border-b border-[#d2d2d8]">
        <span className="rotate-180"><Down /></span>
      </div>
      <div className="flex h-6 items-center justify-end gap-[3px] pt-[2px] pr-[10px]">
        <button type="button" className="h-4 w-[35px] border border-[#b4b4bc] bg-[#d4d4d9]">确定</button>
        <button type="button" className="h-4 w-[35px] border border-[#b4b4bc] bg-[#d4d4d9]">取消</button>
      </div>
    </div>
  );
}

/* ---------- page ---------- */

export default function App() {
  return (
    <div className="min-h-screen bg-white font-['Noto_Sans','Noto_Sans_CJK_SC',sans-serif]">
      <div className="relative grid w-full max-w-[640px] grid-cols-1 overflow-hidden">
        <div className="col-start-1 row-start-1 flex min-w-0 flex-col">
          <Ribbon />
          <main className="flex min-h-0 grow">
            <aside className="flex w-5 shrink-0 flex-col items-center border-r border-[#b9b9c4] bg-[#d6d6da]">
              <button type="button" aria-label="设置" className="mb-[11px] flex h-[15px] items-center"><Gear color="#333" /></button>
              {railIcons.map((r) => (
                <button
                  key={r.n}
                  type="button"
                  aria-label={r.n}
                  className={`flex h-[27px] w-full items-center justify-center ${r.active ? "bg-white" : ""} ${r.gap ? "mt-2" : ""}`}
                >
                  <Svg>{r.d}</Svg>
                </button>
              ))}
            </aside>
            <aside className="ml-[2px] flex w-[103px] shrink-0 flex-col overflow-hidden border-l border-[#c6c6d4] bg-[#fdfdfc] pl-[3px] text-[8px] leading-[13px] text-[#333]">
              <h2 className="flex h-[17px] items-center whitespace-nowrap">工序导航器 - 程序顺序</h2>
              <div className="-ml-[2px] h-[14px] bg-[#dfdfe3] pl-1">名称</div>
              <ul role="tree" className="grow">
                {tree.map((n, i) => <TreeRow key={i} n={n} />)}
              </ul>
              <div className="flex h-[11px] items-center bg-[#ececf0] pl-[2px]">
                <span className="rotate-90"><Down /></span>
                <span className="ml-1 flex h-[10px] w-[34px] items-center justify-center gap-px border border-[#a8a8b0] bg-[#e4e4e8]">
                  <span className="h-1 w-px bg-[#666]" /><span className="h-1 w-px bg-[#666]" /><span className="h-1 w-px bg-[#666]" />
                </span>
              </div>
              <button type="button" className="mt-[2px] -ml-[3px] h-[18px] border-t-2 border-b border-t-[#b9b9c2] border-b-[#b5b5c6] pl-[5px] text-left text-[9px] text-[#1f7890]">相关性</button>
              <button type="button" className="mb-[3px] -ml-[3px] h-4 border-b border-[#b5b5c6] pl-[5px] text-left text-[9px] text-[#1f7890]">细节</button>
            </aside>
            <div className="ml-[209px] flex min-w-0 grow flex-col bg-[#fbfbfd] pt-3">
              <div className="grid min-h-0 grow border-t border-b border-t-[#5ba4b0] border-b-[#a9a9b8] bg-black [contain:size]">
                <Viewport />
              </div>
            </div>
          </main>
          <footer className="h-[9px] bg-[#fbfbfd] pl-[1px] text-[8px] leading-[9px] font-medium text-black">
            拖动光标来指明缩放矩形
          </footer>
        </div>

        <Dialog />

        {/* freehand mark-up over the region events */}
        <svg viewBox="0 0 224 62" className="pointer-events-none absolute top-[140px] left-[115px] z-20 h-[62px] w-[224px]" fill="none" aria-hidden="true">
          <path
            d="M29 9 27 14C17 20 7 28 4 38 2 44 2 54 8 56c12 4 40 3 62 1 24-2 44-4 66-7 26-2 44-8 70-15 14-4 15-15 9-19C205 8 182 6 155 4 130 2 100 2 78 8 58 12 42 10 28 13"
            stroke="#e81c28"
            strokeWidth="5"
            strokeLinecap="round"
            strokeLinejoin="round"
          />
        </svg>
      </div>
    </div>
  );
}
